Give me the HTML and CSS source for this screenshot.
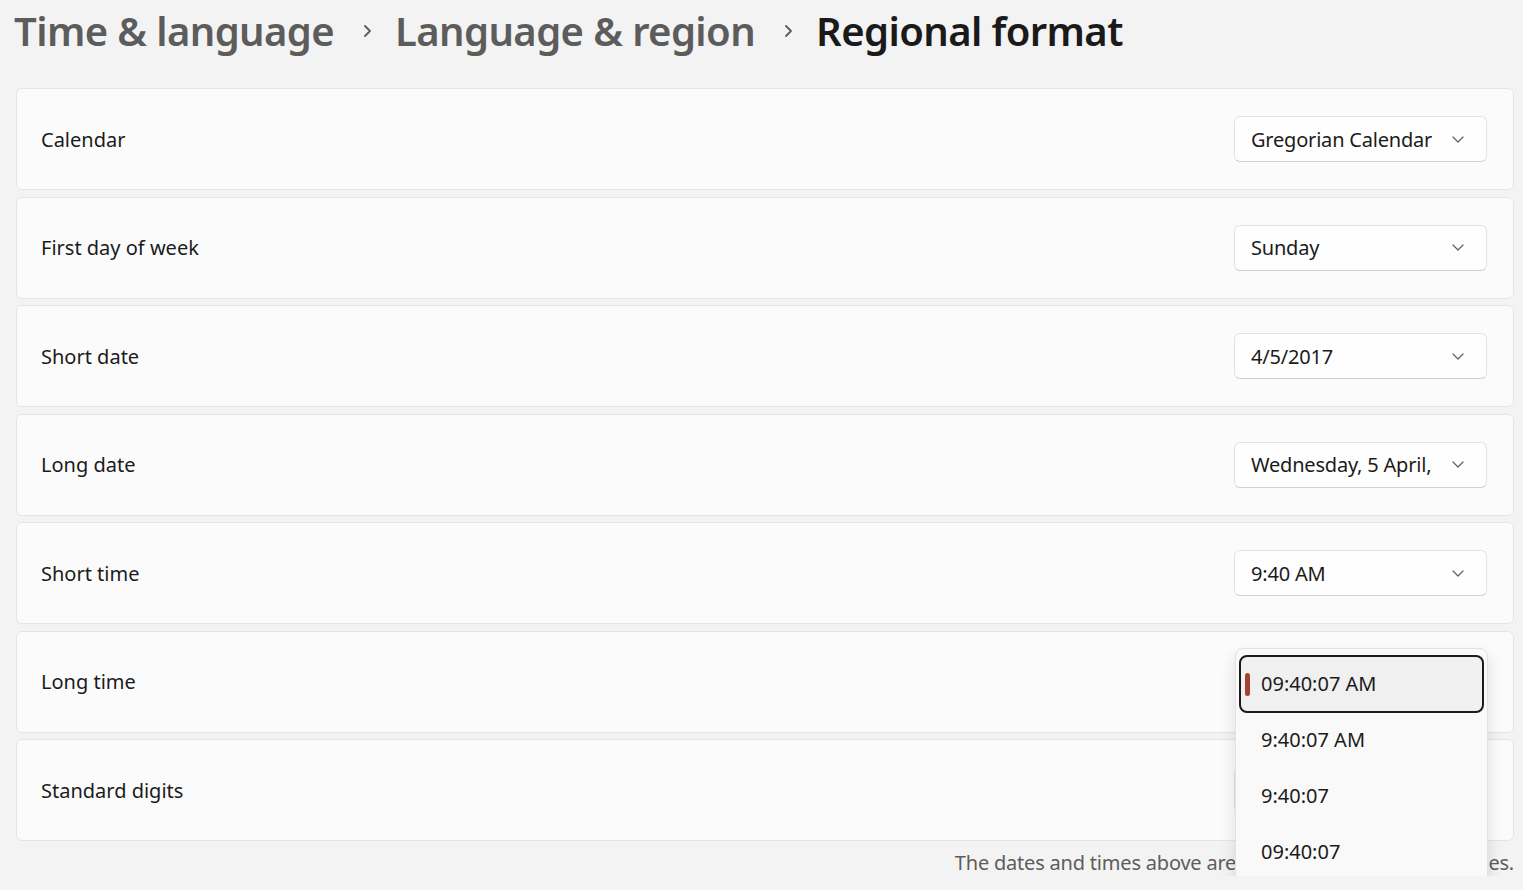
FILE: index.html
```html
<!DOCTYPE html>
<html lang="en">
<head>
<meta charset="utf-8">
<title>Regional format</title>
<link rel="stylesheet" href="styles.css">
</head>
<body>
<header class="crumbs">
  <span class="crumb">Time &amp; language</span>
  <svg class="sep" width="9" height="14" viewBox="0 0 9 14"><path d="M2 2 L7 7 L2 12" fill="none" stroke="#5c5c5c" stroke-width="1.8" stroke-linecap="round" stroke-linejoin="round"/></svg>
  <span class="crumb">Language &amp; region</span>
  <svg class="sep" width="9" height="14" viewBox="0 0 9 14"><path d="M2 2 L7 7 L2 12" fill="none" stroke="#5c5c5c" stroke-width="1.8" stroke-linecap="round" stroke-linejoin="round"/></svg>
  <span class="crumb current">Regional format</span>
</header>

<main class="list">
  <div class="card">
    <span class="label">Calendar</span>
    <div class="combo"><span class="value">Gregorian Calendar</span><svg class="chev" width="12" height="7" viewBox="0 0 12 7"><path d="M1 1 L6 6 L11 1" fill="none" stroke="#5f5f5f" stroke-width="1.2" stroke-linecap="round" stroke-linejoin="round"/></svg></div>
  </div>
  <div class="card">
    <span class="label">First day of week</span>
    <div class="combo"><span class="value">Sunday</span><svg class="chev" width="12" height="7" viewBox="0 0 12 7"><path d="M1 1 L6 6 L11 1" fill="none" stroke="#5f5f5f" stroke-width="1.2" stroke-linecap="round" stroke-linejoin="round"/></svg></div>
  </div>
  <div class="card">
    <span class="label">Short date</span>
    <div class="combo"><span class="value">4/5/2017</span><svg class="chev" width="12" height="7" viewBox="0 0 12 7"><path d="M1 1 L6 6 L11 1" fill="none" stroke="#5f5f5f" stroke-width="1.2" stroke-linecap="round" stroke-linejoin="round"/></svg></div>
  </div>
  <div class="card">
    <span class="label">Long date</span>
    <div class="combo"><span class="value">Wednesday, 5 April, 2017</span><svg class="chev" width="12" height="7" viewBox="0 0 12 7"><path d="M1 1 L6 6 L11 1" fill="none" stroke="#5f5f5f" stroke-width="1.2" stroke-linecap="round" stroke-linejoin="round"/></svg></div>
  </div>
  <div class="card">
    <span class="label">Short time</span>
    <div class="combo"><span class="value">9:40 AM</span><svg class="chev" width="12" height="7" viewBox="0 0 12 7"><path d="M1 1 L6 6 L11 1" fill="none" stroke="#5f5f5f" stroke-width="1.2" stroke-linecap="round" stroke-linejoin="round"/></svg></div>
  </div>
  <div class="card has-popup">
    <span class="label">Long time</span>
    <div class="popup">
      <div class="item selected"><span class="pill"></span>09:40:07 AM</div>
      <div class="item">9:40:07 AM</div>
      <div class="item">9:40:07</div>
      <div class="item">09:40:07</div>
    </div>
  </div>
  <div class="card">
    <span class="label">Standard digits</span>
    <div class="combo"><span class="value"></span><svg class="chev" width="12" height="7" viewBox="0 0 12 7"><path d="M1 1 L6 6 L11 1" fill="none" stroke="#5f5f5f" stroke-width="1.2" stroke-linecap="round" stroke-linejoin="round"/></svg></div>
  </div>
  <p class="note">The dates and times above are used as formatting examples.</p>
</main>
</body>
</html>
```

FILE: styles.css
```css
* { box-sizing: border-box; }

html, body {
  margin: 0;
  padding: 0;
  background: #f3f3f3;
  font-family: "Noto Sans", "Open Sans", sans-serif;
  color: #1b1b1b;
  overflow: hidden;
}

.crumbs {
  display: flex;
  align-items: center;
  height: 88px;
  padding: 0 0 27px 14px;
}

.crumb {
  font-size: 40px;
  font-weight: 600;
  color: #5c5c5c;
  letter-spacing: -0.6px;
  line-height: 60px;
}

.crumb.current {
  color: #1a1a1a;
}

.sep {
  margin: 0 23px 0 29px;
  flex: none;
}

.list {
  display: flex;
  flex-direction: column;
  gap: 6.5px;
  padding: 0 9px 0 16px;
}

.card {
  position: relative;
  display: flex;
  align-items: center;
  justify-content: space-between;
  height: 102px;
  padding: 0 26px 0 24px;
  background: #fbfbfb;
  border: 1px solid #e5e5e5;
  border-radius: 6px;
}

.label {
  font-size: 20px;
  color: #1b1b1b;
}

.combo {
  display: flex;
  align-items: center;
  width: 253px;
  height: 46px;
  padding: 0 22px 0 16px;
  background: #fefefe;
  border: 1px solid #e3e3e3;
  border-bottom-color: #d0d0d0;
  border-radius: 6px;
}

.value {
  flex: 1;
  min-width: 0;
  overflow: hidden;
  white-space: nowrap;
  font-size: 20px;
  letter-spacing: -0.2px;
  color: #1b1b1b;
}

.chev {
  flex: none;
  margin-left: 20px;
}

.popup {
  position: absolute;
  top: 16px;
  right: 25px;
  width: 253px;
  height: 238px;
  padding: 7px 4px;
  background: #f9f9f9;
  border: 1px solid #e2e2e2;
  border-radius: 8px;
  box-shadow: 0 8px 16px rgba(0, 0, 0, 0.12);
  z-index: 5;
}

.item {
  position: relative;
  display: flex;
  align-items: center;
  height: 56px;
  padding-left: 21px;
  font-size: 20px;
  color: #1b1b1b;
  border-radius: 7px;
}

.item.selected {
  background: #f0f0f0;
  outline: 2px solid #1b1b1b;
  outline-offset: -1px;
}

.pill {
  position: absolute;
  left: 5px;
  top: 17px;
  width: 5px;
  height: 23px;
  border-radius: 3px;
  background: #a2442f;
}

.note {
  margin: 1px 0 0;
  text-align: right;
  font-size: 20px;
  letter-spacing: -0.2px;
  color: #5d5d5d;
}
```
